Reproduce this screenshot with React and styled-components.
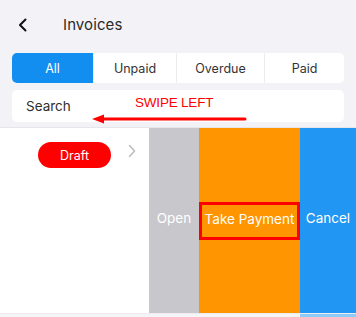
import React from "react";
import styled, { createGlobalStyle } from "styled-components";

const Global = createGlobalStyle`
  html, body { margin: 0; padding: 0; background: #ffffff; }
  body { font-family: Inter, "Noto Sans", sans-serif; }
  * { box-sizing: border-box; }
`;

const Screen = styled.div`
  width: 356px;
  height: 317px;
  overflow: hidden;
  display: flex;
  flex-direction: column;
  background: #ffffff;
`;

const Header = styled.div`
  background: #f3f3f7;
  padding: 0 12px 5px 12px;
  border-bottom: 1px solid #e6e6ea;
  display: flex;
  flex-direction: column;
`;

const TitleBar = styled.div`
  height: 53px;
  display: flex;
  align-items: center;
  padding-bottom: 4px;
`;

const BackButton = styled.div`
  width: 51px;
  padding-left: 6px;
  display: flex;
  align-items: center;
  color: #111;
`;

const Title = styled.div`
  font-size: 15px;
  color: #2a2a2a;
  letter-spacing: 0.1px;
`;

const Segments = styled.div`
  display: grid;
  grid-template-columns: 81fr 83fr 88fr 80fr;
  height: 30px;
  background: #ffffff;
  border-radius: 5px;
  overflow: hidden;
`;

const Segment = styled.div`
  display: flex;
  align-items: center;
  justify-content: center;
  font-size: 12.5px;
  color: ${(p) => (p.$active ? "#ffffff" : "#333333")};
  background: ${(p) => (p.$active ? "#128df0" : "#ffffff")};
  border-left: ${(p) => (p.$first ? "none" : "1px solid #ececf0")};
`;

const SearchBox = styled.div`
  position: relative;
  margin-top: 7px;
  height: 32px;
  background: #ffffff;
  border-radius: 5px;
  display: flex;
  align-items: center;
  padding-left: 14px;
  font-size: 13.5px;
  color: #2e2e2e;
`;

const SwipeNote = styled.div`
  position: absolute;
  left: 123px;
  top: 5px;
  font-family: "Liberation Sans", Arial, sans-serif;
  font-size: 13.5px;
  color: #ff0000;
  letter-spacing: -0.2px;
`;

const SwipeArrow = styled.svg`
  position: absolute;
  left: 79px;
  top: 24px;
`;

const Row = styled.div`
  display: flex;
  height: 185px;
  background: #ffffff;
`;

const RowContent = styled.div`
  flex: 1;
  display: flex;
  align-items: flex-start;
  padding: 14px 0 0 38px;
`;

const StatusPill = styled.div`
  width: 73px;
  height: 26px;
  border-radius: 13px;
  background: #ff0000;
  color: #ffffff;
  font-size: 12.5px;
  display: flex;
  align-items: center;
  justify-content: center;
`;

const Chevron = styled.div`
  margin: 2px 0 0 17px;
  color: #bdbdc2;
  display: flex;
`;

const Action = styled.div`
  width: ${(p) => p.$w}px;
  flex: none;
  background: ${(p) => p.$bg};
  color: #ffffff;
  font-size: 13.5px;
  display: flex;
  align-items: center;
  justify-content: center;
  padding-bottom: 6px;
`;

const Highlight = styled.span`
  width: 100%;
  height: 38px;
  margin-top: 6px;
  border: 3px solid #ff0000;
  display: flex;
  align-items: center;
  justify-content: center;
  padding-bottom: 4px;
  white-space: nowrap;
`;

const Footer = styled.div`
  flex: 1;
  display: flex;
  border-top: 1px solid #ececf0;
`;

const FooterPart = styled.div`
  background: ${(p) => p.$bg};
  flex: ${(p) => (p.$w ? `0 0 ${p.$w}px` : "1")};
`;

export default function App() {
  const tabs = ["All", "Unpaid", "Overdue", "Paid"];
  return (
    <Screen>
      <Global />
      <Header>
        <TitleBar>
          <BackButton>
            <svg width="10" height="14" viewBox="0 0 10 14">
              <polyline
                points="7.5,1.5 2,7 7.5,12.5"
                fill="none"
                stroke="#111"
                strokeWidth="2"
                strokeLinecap="round"
                strokeLinejoin="round"
              />
            </svg>
          </BackButton>
          <Title>Invoices</Title>
        </TitleBar>
        <Segments>
          {tabs.map((t, i) => (
            <Segment key={t} $active={i === 0} $first={i === 0}>
              {t}
            </Segment>
          ))}
        </Segments>
        <SearchBox>
          Search
          <SwipeNote>SWIPE LEFT</SwipeNote>
          <SwipeArrow width="156" height="10" viewBox="0 0 156 10">
            <line x1="10" y1="5" x2="154" y2="5" stroke="#ff0000" strokeWidth="3" strokeLinecap="round" />
            <polygon points="1,5 13,0.5 13,9.5" fill="#ff0000" />
          </SwipeArrow>
        </SearchBox>
      </Header>
      <Row>
        <RowContent>
          <StatusPill>Draft</StatusPill>
          <Chevron>
            <svg width="8" height="14" viewBox="0 0 8 14">
              <polyline
                points="1.5,1.5 6.5,7 1.5,12.5"
                fill="none"
                stroke="#bdbdc2"
                strokeWidth="1.6"
                strokeLinecap="round"
                strokeLinejoin="round"
              />
            </svg>
          </Chevron>
        </RowContent>
        <Action $w={50} $bg="#c7c7cc">Open</Action>
        <Action $w={101} $bg="#ff9500">
          <Highlight>Take Payment</Highlight>
        </Action>
        <Action $w={56} $bg="#2196f3">Cancel</Action>
      </Row>
      <Footer>
        <FooterPart $bg="#f5f5f8" />
        <FooterPart $w={56} $bg="#8fcbf7" />
      </Footer>
    </Screen>
  );
}
